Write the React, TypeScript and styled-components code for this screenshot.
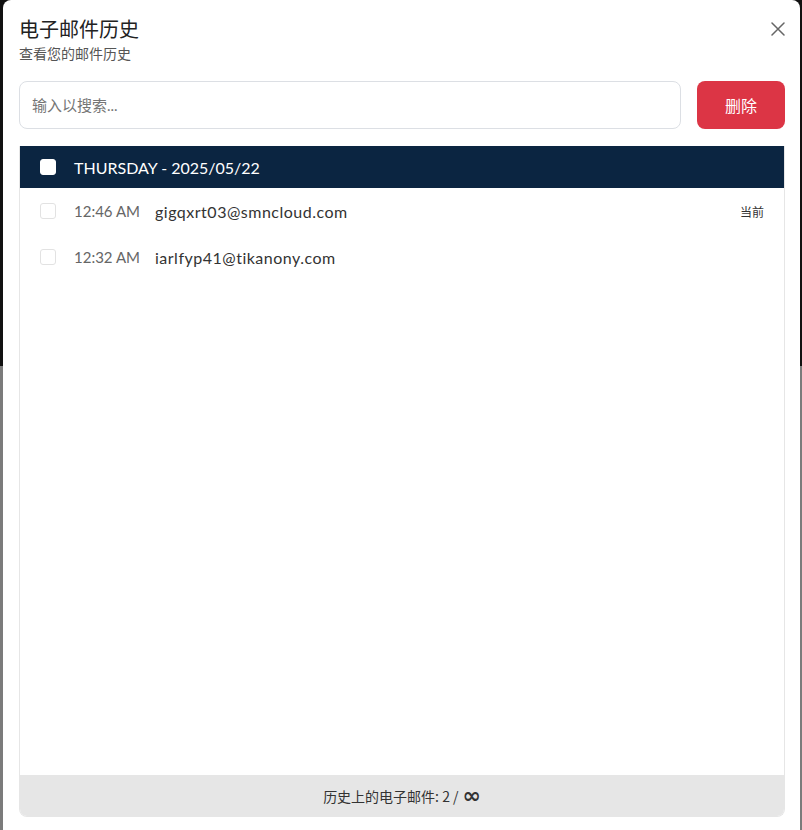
import React from 'react';
import styled, { createGlobalStyle } from 'styled-components';

const GlobalStyle = createGlobalStyle`
	html, body {
		margin: 0;
		padding: 0;
		overflow: hidden;
	}
	body {
		font-family: 'Lato', 'Noto Sans CJK SC', sans-serif;
	}
`;

const Backdrop = styled.div`
	height: 830px;
	overflow: hidden;
	display: flex;
	padding: 0 2px 0 3px;
	background: linear-gradient(#111111 0 366px, #7b7b7b 366px);
`;

const Modal = styled.div`
	flex: 1;
	height: 840px;
	background: #fff;
	border-radius: 8px 8px 0 0;
	padding: 16px 15px 0 16px;
	display: flex;
	flex-direction: column;
	box-sizing: border-box;
`;

const Head = styled.div`
	display: flex;
	justify-content: space-between;
	align-items: flex-start;
`;

const Title = styled.h2`
	margin: 0;
	font-size: 20px;
	font-weight: 400;
	line-height: 26px;
	color: #222;
	font-family: 'Noto Sans CJK SC', sans-serif;
`;

const Subtitle = styled.div`
	margin-top: 1px;
	font-size: 14px;
	line-height: 20px;
	color: #555;
	font-family: 'Noto Sans CJK SC', sans-serif;
`;

const Close = styled.button`
	border: none;
	background: none;
	padding: 0;
	margin: 6px 0 0 0;
	width: 14px;
	height: 14px;
	cursor: pointer;
	display: flex;
`;

const Toolbar = styled.div`
	display: flex;
	gap: 16px;
	margin-top: 18px;
`;

const Search = styled.input`
	flex: 1;
	height: 48px;
	box-sizing: border-box;
	border: 1px solid #dcdfe4;
	border-radius: 8px;
	padding: 0 12px;
	font-size: 15px;
	font-family: 'Lato', 'Noto Sans CJK SC', sans-serif;
	outline: none;

	::placeholder {
		color: #777;
	}
`;

const DeleteButton = styled.button`
	width: 88px;
	height: 48px;
	border: none;
	border-radius: 8px;
	background: #dc3545;
	color: #fff;
	font-size: 16px;
	font-family: 'Noto Sans CJK SC', sans-serif;
	cursor: pointer;
`;

const List = styled.div`
	margin-top: 17px;
	height: 671px;
	border: 1px solid #e6e6e6;
	border-top: none;
	border-radius: 0 0 8px 8px;
	display: flex;
	flex-direction: column;
	overflow: hidden;
	box-sizing: border-box;
`;

const DayRow = styled.div`
	height: 42px;
	background: #0b2541;
	display: flex;
	align-items: center;
	padding-left: 20px;
	gap: 18px;
	color: #fff;
	font-size: 16px;
`;

const Box = styled.span<{ $filled?: boolean }>`
	width: 16px;
	height: 16px;
	box-sizing: border-box;
	border-radius: 3px;
	background: #fff;
	border: 1px solid ${(p) => (p.$filled ? '#fff' : '#e2e2e2')};
	flex-shrink: 0;
`;

const Rows = styled.div`
	flex: 1;
`;

const Row = styled.div`
	height: 46px;
	display: flex;
	align-items: center;
	padding: 0 20px;
`;

const Time = styled.span`
	margin-left: 18px;
	width: 81px;
	font-size: 15px;
	color: #666;
`;

const Email = styled.span`
	flex: 1;
	font-size: 16px;
	letter-spacing: 0.5px;
	color: #333;
`;

const Current = styled.span`
	font-size: 12px;
	color: #333;
	font-family: 'Noto Sans CJK SC', sans-serif;
`;

const Footer = styled.div`
	height: 41px;
	background: #e6e6e6;
	display: flex;
	align-items: center;
	justify-content: center;
	font-size: 14px;
	color: #333;
	font-family: 'Noto Sans CJK SC', sans-serif;
`;

const Infinity = styled.span`
	font-size: 22px;
	font-weight: 700;
	margin-left: 4px;
	line-height: 1;
	font-family: 'DejaVu Sans', sans-serif;
`;

const emails = [
	{ time: '12:46 AM', address: 'gigqxrt03@smncloud.com', current: true },
	{ time: '12:32 AM', address: 'iarlfyp41@tikanony.com', current: false },
];

export default function App() {
	return (
		<Backdrop>
			<GlobalStyle />
			<Modal>
				<Head>
					<div>
						<Title>电子邮件历史</Title>
						<Subtitle>查看您的邮件历史</Subtitle>
					</div>
					<Close aria-label="close">
						<svg width="14" height="14" viewBox="0 0 14 14">
							<path d="M1 1L13 13M13 1L1 13" stroke="#666" strokeWidth="1.5" strokeLinecap="round" />
						</svg>
					</Close>
				</Head>
				<Toolbar>
					<Search placeholder="输入以搜索..." />
					<DeleteButton>删除</DeleteButton>
				</Toolbar>
				<List>
					<DayRow>
						<Box $filled />
						<span>THURSDAY - 2025/05/22</span>
					</DayRow>
					<Rows>
						{emails.map((e) => (
							<Row key={e.address}>
								<Box />
								<Time>{e.time}</Time>
								<Email>{e.address}</Email>
								{e.current && <Current>当前</Current>}
							</Row>
						))}
					</Rows>
					<Footer>
						历史上的电子邮件: 2 /<Infinity>∞</Infinity>
					</Footer>
				</List>
			</Modal>
		</Backdrop>
	);
}
